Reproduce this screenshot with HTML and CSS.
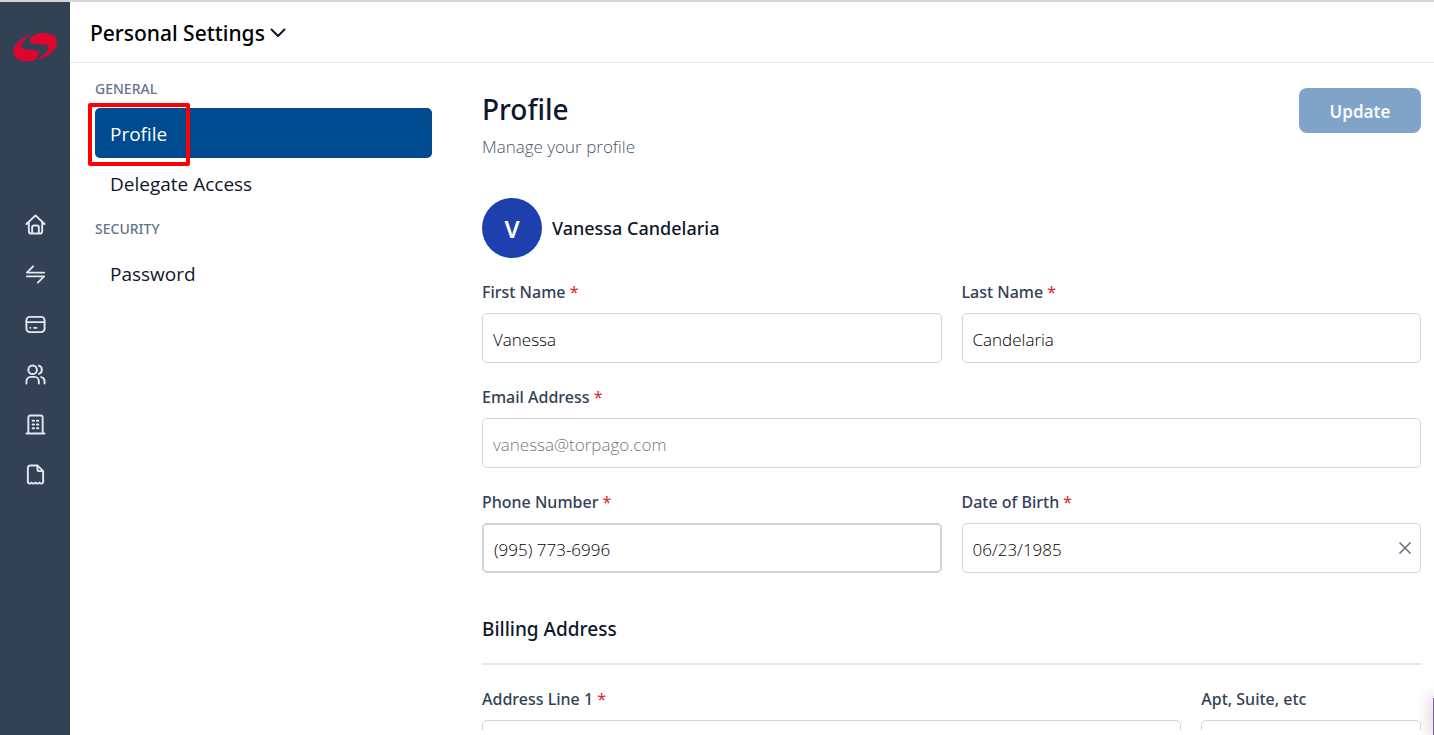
FILE: index.html
```
<!DOCTYPE html>
<html lang="en">
<head>
  <meta charset="utf-8">
  <title>Personal Settings</title>
  <link rel="stylesheet" href="styles.css">
</head>
<body>
  <div class="app">
    <nav class="sidebar" aria-label="Main">
      <a class="logo" href="#" aria-label="Dashboard">
        <svg width="46" height="30" viewBox="36 96 138 90" fill="#dc062f">
          <path d="M96 104 C70 110 42 128 40 152 C39 174 60 184 84 184 C100 184 110 178 114 168 C120 157 116 152 104 151 L76 148 C62 146 60 140 66 130 C72 120 84 110 96 104Z"/>
          <path d="M93 113 C102 103 116 99 132 99 C156 99 171 110 171 126 C171 150 142 174 108 180 C126 171 142 158 146 145 C148 138 142 135 132 134 L104 131 C90 129 86 122 93 113Z"/>
        </svg>
      </a>
      <ul class="menu">
        <li><a href="#" aria-label="Home"><svg viewBox="0 0 22 22"><path d="M1.5 10.5 11 1.5l9.5 9M4 8.5V18a2.5 2.5 0 0 0 2.5 2.5h9A2.5 2.5 0 0 0 18 18V8.5M7.5 20.5V14a2 2 0 0 1 2-2h3a2 2 0 0 1 2 2v6.5"/></svg></a></li>
        <li><a href="#" aria-label="Transactions"><svg viewBox="0 0 22 22"><path d="M20 9H2L8.5 2.5M2 13h18L13.500 19.5"/></svg></a></li>
        <li><a href="#" aria-label="Cards"><svg viewBox="0 0 22 22"><rect x="1.5" y="3" width="19" height="16" rx="3.5"/><path d="M1.5 8.5h19M5.5 14.5h.2M9.5 14.5h2.5"/></svg></a></li>
        <li><a href="#" aria-label="People"><svg viewBox="0 0 22 22"><circle cx="8" cy="6" r="4.5"/><path d="M1.5 20.5V18a4.5 4.5 0 0 1 4.5-4.5h4a4.5 4.5 0 0 1 4.5 4.5v2.5M14.5 1.7a4.5 4.5 0 0 1 0 8.6M17 13.7a4.5 4.5 0 0 1 3.5 4.3v2.5"/></svg></a></li>
        <li><a href="#" aria-label="Company"><svg viewBox="0 0 22 22"><path d="M1.5 20.5h19M3.5 20.5V3.5a2 2 0 0 1 2-2h11a2 2 0 0 1 2 2v17M8 7h1.5M12.5 7H14M8 11h1.5M12.5 11H14M8 15h1.5M12.5 15H14"/></svg></a></li>
        <li><a href="#" aria-label="Receipts"><svg viewBox="0 0 22 22"><path d="M13 1.5H5.5A2.5 2.5 0 0 0 3 4v15.5c1.3 1.3 2.700 1.3 4 0 1.3 1.3 2.7 1.3 4 0 1.3 1.3 2.7 1.3 4 0 1.3 1.3 2.7 1.3 4 0V7.5l-6-6v4a2 2 0 0 0 2 2h4"/></svg></a></li>
      </ul>
    </nav>

    <div class="page">
      <header class="header">
        <button class="switcher" type="button">Personal Settings
          <svg width="16" height="10" viewBox="0 0 16 10"><path d="M1.5 1.5 8 8l6.5-6.5"/></svg>
        </button>
      </header>

      <div class="body">
        <nav class="settings" aria-label="Settings">
          <h2>GENERAL</h2>
          <div class="marked">
            <a class="active" href="#">Profile</a>
            <span class="marker"></span>
          </div>
          <a href="#">Delegate Access</a>
          <h2>SECURITY</h2>
          <a href="#">Password</a>
        </nav>

        <form class="content">
          <div class="title">
            <div>
              <h1>Profile</h1>
              <p>Manage your profile</p>
            </div>
            <button class="update" type="submit" disabled>Update</button>
          </div>

          <div class="person">
            <span class="avatar">V</span>
            <span>Vanessa Candelaria</span>
          </div>

          <div class="fields">
            <div class="field half">
              <label for="first">First Name <em>*</em></label>
              <input id="first" type="text" value="Vanessa">
            </div>
            <div class="field half">
              <label for="last">Last Name <em>*</em></label>
              <input id="last" type="text" value="Candelaria">
            </div>
            <div class="field full">
              <label for="email">Email Address <em>*</em></label>
              <input id="email" type="email" value="vanessa@torpago.com" disabled>
            </div>
            <div class="field half">
              <label for="phone">Phone Number <em>*</em></label>
              <input id="phone" class="thick" type="tel" value="(995) 773-6996">
            </div>
            <div class="field half">
              <label for="birth">Date of Birth <em>*</em></label>
              <div class="clearable">
                <input id="birth" type="text" value="06/23/1985">
                <button class="clear" type="button" aria-label="Clear date">
                  <svg width="14" height="14" viewBox="0 0 14 14"><path d="M1.5 1.5l11 11M12.5 1.5l-11 11"/></svg>
                </button>
              </div>
            </div>
          </div>

          <h3>Billing Address</h3>

          <div class="fields">
            <div class="field wide">
              <label for="line1">Address Line 1 <em>*</em></label>
              <input id="line1" type="text">
            </div>
            <div class="field">
              <label for="apt">Apt, Suite, etc</label>
              <input id="apt" type="text">
            </div>
          </div>
        </form>
      </div>
    </div>
  </div>
  <div class="widget"></div>
</body>
</html>
```
FILE: styles.css
```
* {
  box-sizing: border-box;
}
body {
  margin: 0;
  overflow: hidden;
  color: #0f172a;
  background: #fff;
}
body, input, button {
  font-family: "Noto Sans", "Open Sans", sans-serif;
}
h1, h2, h3, p, ul {
  margin: 0;
  padding: 0;
}
a {
  color: inherit;
  text-decoration: none;
}
svg {
  display: block;
}
.app {
  display: flex;
  height: 100vh;
  border-top: 2px solid #d6d6d6;
}

/* dark icon bar */
.sidebar {
  flex: none;
  width: 70px;
  padding-top: 30px;
  background: #334155;
}
.logo {
  display: block;
  height: 167px;
  padding-left: 12px;
}
.menu {
  list-style: none;
}
.menu a {
  display: flex;
  align-items: center;
  height: 50px;
  padding-left: 25px;
}
.menu svg {
  width: 21px;
  height: 21px;
  fill: none;
  stroke: #e2e8f0;
  stroke-width: 2;
  stroke-linecap: round;
  stroke-linejoin: round;
}

.page {
  flex: 1;
  display: flex;
  flex-direction: column;
  min-width: 0;
  padding-bottom: 5px;
}
.header {
  flex: none;
  display: flex;
  align-items: center;
  height: 61px;
  padding-left: 20px;
  border-bottom: 1px solid #e2e8f0;
}
.switcher {
  display: flex;
  align-items: center;
  gap: 5px;
  padding: 2px 0 0;
  border: 0;
  background: none;
  color: #000;
  font-size: 21px;
  font-weight: 500;
}
.switcher svg {
  fill: none;
  stroke: #0f172a;
  stroke-width: 2;
  stroke-linecap: round;
}
.body {
  flex: 1;
  display: flex;
  gap: 50px;
  min-height: 0;
  padding: 10px 13px 0 25px;
  overflow: hidden;
}

/* settings list */
.settings {
  flex: none;
  width: 337px;
  font-family: "Open Sans", sans-serif;
  font-size: 19px;
}
.settings h2 {
  margin-bottom: 5px;
  color: #64748b;
  font-family: "Noto Sans", "Open Sans", sans-serif;
  font-size: 14px;
  font-weight: 500;
  line-height: 32px;
  height: 30px;
}
.settings a {
  display: block;
  height: 50px;
  padding-left: 15px;
  border-radius: 5px;
  line-height: 52px;
}
.settings > a {
  margin-bottom: 5px;
}
.settings .active {
  background: #004b8f;
  color: #fff;
}
.marked {
  position: relative;
}
.marker {
  position: absolute;
  top: -5px;
  left: -7px;
  width: 102px;
  height: 63px;
  border: 4px solid #f00;
  border-radius: 2px;
}

/* profile form */
.content {
  flex: 1;
  min-width: 0;
  padding-top: 15px;
}
.title {
  display: flex;
  align-items: flex-start;
  justify-content: space-between;
  height: 110px;
}
.title h1 {
  font-size: 28px;
  font-weight: 500;
  line-height: 42px;
}
.title p {
  color: #475569;
  font-family: "Open Sans", sans-serif;
  font-size: 17px;
  font-weight: 300;
  line-height: 34px;
}
.update {
  width: 122px;
  height: 45px;
  padding: 2px 0 0;
  border: 0;
  border-radius: 8px;
  background: #80a3c8;
  color: #f8fafc;
  font-size: 17px;
  font-weight: 600;
}
.person {
  display: flex;
  align-items: center;
  gap: 10px;
  margin-bottom: 20px;
  font-size: 18px;
  font-weight: 500;
}
.avatar {
  width: 60px;
  height: 60px;
  border-radius: 50%;
  background: #1e40af;
  color: #fff;
  font-size: 24px;
  font-weight: 600;
  line-height: 62px;
  text-align: center;
}
.fields {
  display: grid;
  grid-template-columns: repeat(4, 1fr);
  gap: 20px;
}
.half {
  grid-column: span 2;
}
.wide {
  grid-column: span 3;
}
.full {
  grid-column: span 4;
}
.field label {
  display: block;
  margin-bottom: 7px;
  color: #334155;
  font-size: 16px;
  font-weight: 500;
  line-height: 28px;
}
.field em {
  color: #dc2626;
  font-style: normal;
  font-weight: 400;
}
.field input {
  display: block;
  width: 100%;
  height: 50px;
  padding: 2px 10px 0;
  border: 1px solid #d1d5db;
  border-radius: 5px;
  background: #fff;
  color: #000;
  font-family: "Open Sans", sans-serif;
  font-size: 17px;
  font-weight: 300;
}
.field input:disabled {
  color: #77777c;
}
.field .thick {
  border-width: 2px;
}
.clearable {
  position: relative;
}
.clear {
  position: absolute;
  top: 18px;
  right: 9px;
  padding: 0;
  border: 0;
  background: none;
}
.clear svg {
  fill: none;
  stroke: #6b7280;
  stroke-width: 1.6;
}
.content h3 {
  margin: 40px 0 20px;
  padding-bottom: 18px;
  border-bottom: 2px solid #e2e8f0;
  font-size: 19px;
  font-weight: 500;
  line-height: 32px;
}

/* edge of the help widget */
.widget {
  position: absolute;
  right: 0;
  bottom: 0;
  width: 1px;
  height: 37px;
  background: #7e57a8;
  box-shadow: 0 0 14px 2px rgba(0, 0, 0, .3);
}
```
